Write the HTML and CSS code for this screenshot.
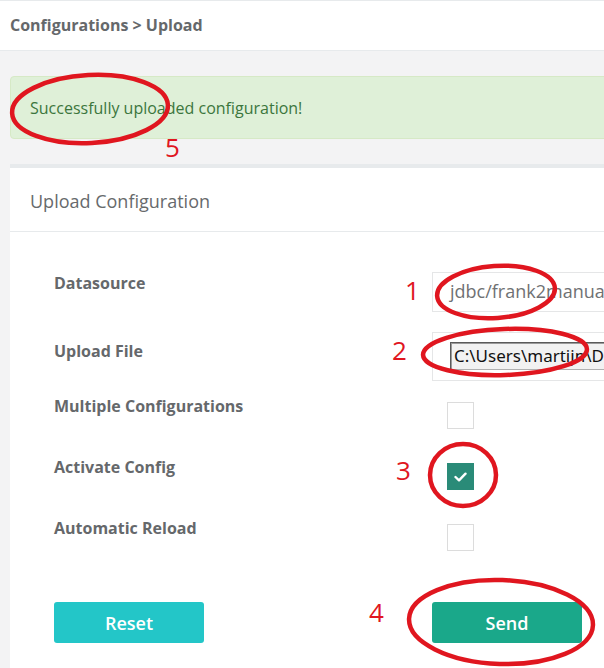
FILE: index.html
```html
<!DOCTYPE html>
<html>
<head>
<meta charset="utf-8">
<link rel="stylesheet" href="styles.css">
</head>
<body>
<div class="page">
  <header class="topbar">
    <h2 class="crumb">Configurations &gt; Upload</h2>
  </header>
  <main class="content">
    <div class="alert">Successfully uploaded configuration!</div>
    <section class="panel">
      <div class="panel-title">Upload Configuration</div>
      <form class="panel-body">
        <div class="row row-text">
          <label class="label">Datasource</label>
          <div class="text-input">jdbc/frank2manual</div>
        </div>
        <div class="row row-file">
          <label class="label">Upload File</label>
          <div class="file-wrap"><div class="file-input">C:\Users\martijn\Documents\config.zip</div></div>
        </div>
        <div class="row row-check">
          <label class="label">Multiple Configurations</label>
          <span class="check"></span>
        </div>
        <div class="row row-check">
          <label class="label">Activate Config</label>
          <span class="check checked"><svg width="13" height="10" viewBox="0 0 13 10"><path d="M1.5 5 L5 8.3 L11.5 1.7" fill="none" stroke="#fff" stroke-width="2.4" stroke-linecap="round" stroke-linejoin="round"/></svg></span>
        </div>
        <div class="row row-check">
          <label class="label">Automatic Reload</label>
          <span class="check"></span>
        </div>
        <div class="row row-buttons">
          <div class="btn-cell"><button type="button" class="btn btn-reset">Reset</button></div>
          <button type="button" class="btn btn-send">Send</button>
        </div>
      </form>
    </section>
  </main>
  <svg class="annotations" width="604" height="668" viewBox="0 0 604 668">
    <g fill="none" stroke="#e0161f" stroke-width="4.5">
      <ellipse cx="90" cy="109" rx="78" ry="34" transform="rotate(-3 90 109)"/>
      <ellipse cx="496" cy="292" rx="59" ry="26" transform="rotate(-4 496 292)"/>
      <ellipse cx="505" cy="352" rx="82" ry="23" transform="rotate(-2 505 352)"/>
      <ellipse cx="463" cy="475" rx="33" ry="31"/>
      <ellipse cx="501" cy="622" rx="92" ry="42" transform="rotate(2 501 622)"/>
    </g>
    <g class="ann-num" fill="#e0161f">
      <text x="165" y="157">5</text>
      <text x="405" y="300">1</text>
      <text x="392" y="360">2</text>
      <text x="396" y="480">3</text>
      <text x="369" y="622">4</text>
    </g>
  </svg>
</div>
</body>
</html>
```

FILE: styles.css
```css
html, body {
  margin: 0;
  padding: 0;
}
body {
  background: #f3f3f4;
  font-family: "Open Sans", "Noto Sans", sans-serif;
  color: #676a6c;
  overflow: hidden;
}
.page {
  position: relative;
  width: 604px;
  height: 668px;
  overflow: hidden;
}
.topbar {
  background: #fff;
  border-top: 1px solid #e7eaec;
  border-bottom: 1px solid #e7eaec;
  box-sizing: border-box;
  height: 51px;
  display: flex;
  align-items: center;
  padding-left: 10px;
}
.crumb {
  margin: 0;
  font-size: 16px;
  font-weight: 700;
  color: #65686b;
  line-height: 20px;
  padding-bottom: 1px;
}
.content {
  padding: 25px 0 0 10px;
  width: 700px;
}
.alert {
  box-sizing: border-box;
  height: 63px;
  background: #dff0d8;
  border: 1px solid #d6e9c6;
  border-radius: 4px;
  color: #3c763d;
  font-size: 16px;
  line-height: 20px;
  padding: 21px 19px 0;
}
.panel {
  margin-top: 25px;
  background: #fff;
  border-top: 4px solid #e7eaec;
}
.panel-title {
  height: 64px;
  box-sizing: border-box;
  border-bottom: 1px solid #e7eaec;
  padding: 21px 20px 0;
  font-size: 18px;
  line-height: 24px;
  color: #676a6c;
}
.panel-body {
  padding: 40px 0 60px 44px;
  margin: 0;
}
.row {
  display: flex;
  align-items: flex-start;
}
.label {
  flex: none;
  width: 378px;
  font-size: 16px;
  font-weight: 700;
  line-height: 20px;
  color: #65686b;
}
.row-text {
  margin-bottom: 20px;
}
.row-text .label {
  margin-top: 1px;
}
.text-input {
  box-sizing: border-box;
  height: 40px;
  width: 260px;
  border: 1px solid #e5e6e7;
  padding: 6px 17px 0;
  font-size: 18px;
  line-height: 25px;
  color: #6f7173;
  white-space: nowrap;
}
.row-file {
  margin-bottom: 15px;
}
.row-file .label {
  margin-top: 9px;
}
.file-wrap {
  box-sizing: border-box;
  height: 49px;
  width: 260px;
  border: 1px solid #e5e6e7;
  padding: 9px 0 0 17px;
}
.file-input {
  box-sizing: border-box;
  height: 28px;
  width: 300px;
  border: 1px solid #5a5a5a;
  border-right-color: #b0b0b0;
  border-bottom-color: #b0b0b0;
  box-shadow: inset 1px 1px 0 #9a9a9a;
  background: #f2f2f2;
  padding: 1px 0 0 3px;
  font-family: "Noto Sans", "Open Sans", sans-serif;
  font-size: 17px;
  line-height: 23px;
  color: #111;
  white-space: nowrap;
  overflow: hidden;
}
.row-check {
  margin-bottom: 28px;
}
.row-check:nth-of-type(5) {
  margin-bottom: 51px;
}
.check {
  box-sizing: border-box;
  margin-top: 6px;
  margin-left: 15px;
  width: 27px;
  height: 27px;
  border: 1px solid #dcdcdc;
  background: #fff;
  display: flex;
  align-items: center;
  justify-content: center;
}
.check.checked {
  background: #2a8b78;
  border-color: #2a8b78;
}
.row-buttons {
  align-items: center;
}
.btn-cell {
  flex: none;
  width: 378px;
}
.btn {
  box-sizing: border-box;
  width: 150px;
  height: 41px;
  border: none;
  border-radius: 3px;
  color: #fff;
  font-family: "Open Sans", "Noto Sans", sans-serif;
  font-size: 18px;
  font-weight: 600;
  padding: 0;
}
.btn-reset {
  background: #23c6c8;
}
.btn-send {
  background: #1aa88a;
}
.annotations {
  position: absolute;
  top: 0;
  left: 0;
  pointer-events: none;
}
.ann-num text {
  font-family: "Open Sans", "Noto Sans", sans-serif;
  font-size: 26px;
}
```
